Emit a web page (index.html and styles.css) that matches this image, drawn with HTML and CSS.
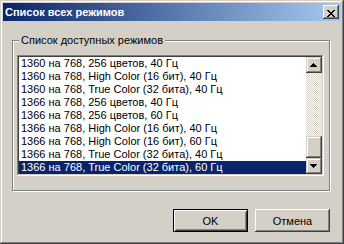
FILE: index.html
```html
<!DOCTYPE html>
<html lang="ru">
<head>
    <meta charset="UTF-8">
    <meta name="viewport" content="width=device-width, initial-scale=1.0">
    <title>Список всех режимов</title>
    <link rel="stylesheet" href="styles.css">
</head>
<body>
    <div class="window">
        <div class="titlebar">
            <span class="title">Список всех режимов</span>
            <button class="close-btn" aria-label="Закрыть">
                <svg width="8" height="7" viewBox="0 0 8 7" shape-rendering="crispEdges">
                    <path d="M0 0h2v1H0z M6 0h2v1H6z M1 1h2v1H1z M5 1h2v1H5z M2 2h4v1H2z M3 3h2v1H3z M2 4h4v1H2z M1 5h2v1H1z M5 5h2v1H5z M0 6h2v1H0z M6 6h2v1H6z" fill="#000"/>
                </svg>
            </button>
        </div>

        <div class="dialog-body">
            <fieldset class="groupbox">
                <legend>Список доступных режимов</legend>
                <div class="listbox">
                    <ul class="modes">
                        <li>1360 на 768, 256 цветов, 40 Гц</li>
                        <li>1360 на 768, High Color (16 бит), 40 Гц</li>
                        <li>1360 на 768, True Color (32 бита), 40 Гц</li>
                        <li>1366 на 768, 256 цветов, 40 Гц</li>
                        <li>1366 на 768, 256 цветов, 60 Гц</li>
                        <li>1366 на 768, High Color (16 бит), 40 Гц</li>
                        <li>1366 на 768, High Color (16 бит), 60 Гц</li>
                        <li>1366 на 768, True Color (32 бита), 40 Гц</li>
                        <li class="selected">1366 на 768, True Color (32 бита), 60 Гц</li>
                    </ul>
                    <div class="scrollbar">
                        <div class="scroll-btn">
                            <svg width="7" height="4" viewBox="0 0 7 4" shape-rendering="crispEdges">
                                <path d="M3 0h1v1H3z M2 1h3v1H2z M1 2h5v1H1z M0 3h7v1H0z" fill="#000"/>
                            </svg>
                        </div>
                        <div class="scroll-track">
                            <div class="scroll-thumb"></div>
                        </div>
                        <div class="scroll-btn">
                            <svg width="7" height="4" viewBox="0 0 7 4" shape-rendering="crispEdges">
                                <path d="M0 0h7v1H0z M1 1h5v1H1z M2 2h3v1H2z M3 3h1v1H3z" fill="#000"/>
                            </svg>
                        </div>
                    </div>
                </div>
            </fieldset>

            <div class="buttons">
                <button class="btn btn-default">OK</button>
                <button class="btn">Отмена</button>
            </div>
        </div>
    </div>
</body>
</html>
```

FILE: styles.css
```css
body {
    margin: 0;
    font-family: "Liberation Sans", Arial, sans-serif;
    font-size: 11px;
    color: #000000;
}

/* Window frame */
.window {
    width: 344px;
    height: 244px;
    box-sizing: border-box;
    padding: 3px;
    background-color: #d4d0c8;
    box-shadow: inset -1px -1px #404040, inset 1px 1px #d4d0c8,
                inset -2px -2px #808080, inset 2px 2px #ffffff;
    display: flex;
    flex-direction: column;
}

.titlebar {
    height: 18px;
    display: flex;
    align-items: center;
    padding: 0 2px;
    background: linear-gradient(to right, #0a246a, #a6caf0);
    color: #ffffff;
    font-weight: bold;
    line-height: 13px;
}

.close-btn {
    display: block;
    width: 16px;
    height: 14px;
    margin-left: auto;
    padding: 0;
    border: none;
    background-color: #d4d0c8;
    box-shadow: inset -1px -1px #404040, inset 1px 1px #ffffff,
                inset -2px -2px #808080, inset 2px 2px #d4d0c8;
}

.close-btn svg {
    display: block;
    margin: 3px 0 0 4px;
}

.dialog-body {
    flex: 1;
    padding: 13px 11px 0 9px;
}

/* Group box */
.groupbox {
    margin: 0;
    padding: 8px 5px 14px 4px;
    min-width: 0;
    border: 1px solid #808080;
    box-shadow: 1px 1px 0 #ffffff, inset 1px 1px 0 #ffffff;
}

.groupbox legend {
    margin-left: 2px;
    padding: 0 2px;
    line-height: 13px;
    background-color: #d4d0c8;
}

/* List box */
.listbox {
    display: flex;
    height: 121px;
    box-sizing: border-box;
    padding: 2px;
    background-color: #ffffff;
    box-shadow: inset -1px -1px #ffffff, inset 1px 1px #808080,
                inset -2px -2px #d4d0c8, inset 2px 2px #404040;
}

.modes {
    flex: 1;
    margin: 0;
    padding: 0;
    list-style: none;
    overflow: hidden;
}

.modes li {
    height: 13px;
    line-height: 13px;
    padding-left: 2px;
    white-space: nowrap;
}

.modes li.selected {
    background-color: #0a246a;
    color: #ffffff;
}

/* Scroll bar */
.scrollbar {
    width: 16px;
    display: flex;
    flex-direction: column;
}

.scroll-btn,
.scroll-thumb {
    background-color: #d4d0c8;
    box-shadow: inset -1px -1px #404040, inset 1px 1px #d4d0c8,
                inset -2px -2px #808080, inset 2px 2px #ffffff;
}

.scroll-btn {
    height: 16px;
}

.scroll-btn svg {
    display: block;
    margin: 6px 0 0 4px;
}

.scroll-track {
    flex: 1;
    display: flex;
    flex-direction: column;
    justify-content: flex-end;
    background: conic-gradient(#d4d0c8 25%, #ffffff 0 50%, #d4d0c8 0 75%, #ffffff 0) 0 0 / 2px 2px;
}

.scroll-thumb {
    height: 22px;
}

/* Dialog buttons */
.buttons {
    display: flex;
    justify-content: flex-end;
    gap: 7px;
    margin-top: 18px;
}

.btn {
    width: 75px;
    height: 23px;
    padding: 0;
    border: none;
    font-family: "Liberation Sans", Arial, sans-serif;
    font-size: 11px;
    color: #000000;
    background-color: #d4d0c8;
    box-shadow: inset -1px -1px #404040, inset 1px 1px #ffffff,
                inset -2px -2px #808080, inset 2px 2px #d4d0c8;
}

.btn-default {
    box-shadow: inset 0 0 0 1px #000000, inset 2px 2px #ffffff,
                inset -2px -2px #404040, inset 3px 3px #d4d0c8,
                inset -3px -3px #808080;
}
```
